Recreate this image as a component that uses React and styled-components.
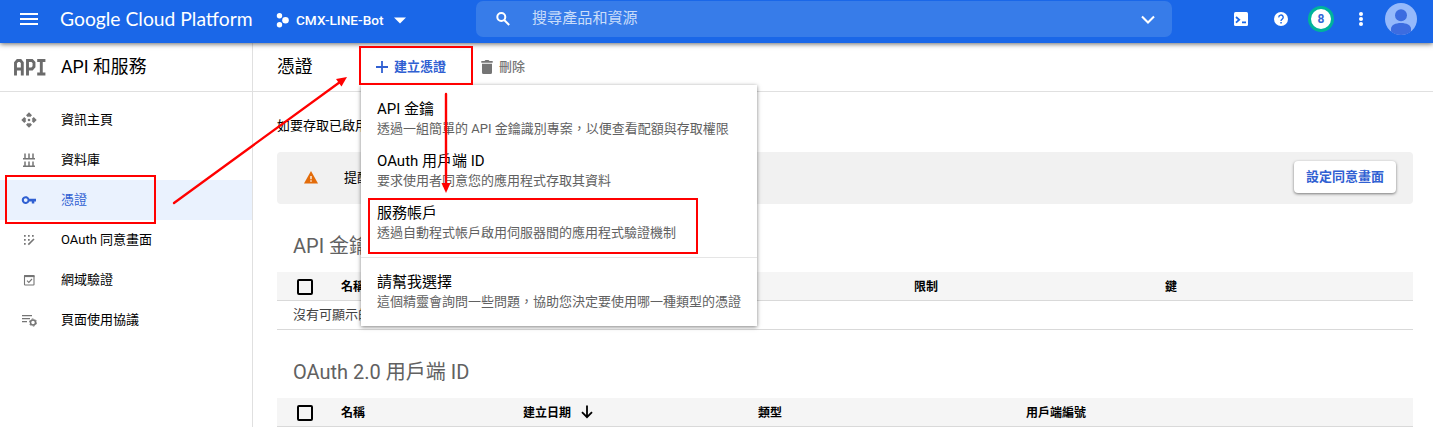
import React from 'react';
import styled, { createGlobalStyle } from 'styled-components';

const Global = createGlobalStyle`
  * { box-sizing: border-box; }
  body {
    margin: 0;
    background: #fff;
    color: #000;
    font-family: Roboto, "Noto Sans CJK TC", sans-serif;
    font-size: 13px;
    overflow: hidden;
  }
  svg { display: block; flex: none; }
`;

const Page = styled.div`
  position: relative;
  height: 427px;
  overflow: hidden;
  display: flex;
  flex-direction: column;
`;

const TopBar = styled.header`
  position: relative;
  display: flex;
  align-items: center;
  flex: none;
  height: 43px;
  padding: 0 16px 5px 17px;
  background: #1a67e8;
  color: #fff;
  box-shadow: 0 1px 5px rgba(0, 0, 0, 0.6);
  z-index: 1;
`;

const Logo = styled.div`
  width: 194px;
  margin-left: 19px;
  font-family: Lato, sans-serif;
  font-size: 19.3px;
  line-height: 26px;
  white-space: nowrap;
`;

const Project = styled.div`
  display: flex;
  align-items: center;
  width: 200px;
  margin-left: 21px;
  padding-top: 2px;
  font-size: 13.6px;
  font-weight: 500;
  white-space: nowrap;
`;

const ProjectName = styled.span`
  width: 88px;
  margin: 0 10px 0 7px;
`;

const Search = styled.div`
  display: flex;
  align-items: center;
  width: 696px;
  height: 36px;
  margin-left: 1px;
  padding: 0 14px 0 18px;
  border-radius: 7px;
  background: #377ce9;
  color: #c9dcfa;
  font-size: 15.1px;
`;

const SearchText = styled.span`
  flex: 1;
  margin-left: 20px;
  line-height: 20px;
  padding-bottom: 3px;
`;

const Tools = styled.div`
  display: flex;
  align-items: center;
  margin-left: auto;
`;

const ToolIcon = styled.svg`
  margin-right: ${(p) => p.$gap}px;
`;

const Badge = styled.div`
  display: flex;
  align-items: center;
  justify-content: center;
  width: 26px;
  height: 26px;
  margin-right: 24px;
  border: 3px solid #00b39b;
  border-radius: 50%;
  background: #fff;
  color: #3367d6;
  font-size: 12px;
  font-weight: 700;
`;

const Body = styled.div`
  display: flex;
  flex: 1;
  min-height: 0;
`;

const Sidebar = styled.nav`
  width: 253px;
  flex: none;
  border-right: 1px solid #e0e0e0;
`;

const Label = styled.span`
  padding-bottom: ${(p) => p.$lift || 4}px;
`;

const SideTitle = styled.div`
  display: flex;
  align-items: center;
  gap: 15px;
  height: 49px;
  padding-left: 14px;
  border-bottom: 1px solid #e0e0e0;
  font-size: 17.8px;
`;

const SideList = styled.div`
  padding-top: 8px;
`;

const SideItem = styled.div`
  display: flex;
  align-items: center;
  gap: 24px;
  height: 40px;
  padding-left: 21px;
  color: ${(p) => (p.$active ? '#3060d2' : '#000')};
  background: ${(p) => (p.$active ? '#eaf2fe' : 'transparent')};
  svg { color: ${(p) => (p.$active ? '#3060d2' : '#757575')}; }
`;

const Main = styled.main`
  flex: 1;
  min-width: 0;
`;

const Toolbar = styled.div`
  display: flex;
  align-items: center;
  height: 49px;
  padding-left: 24px;
  border-bottom: 1px solid #e0e0e0;
`;

const PageTitle = styled.h1`
  width: 98px;
  margin: 0;
  padding-bottom: 4px;
  font-size: 17.8px;
  font-weight: 400;
`;

const ToolButton = styled.div`
  display: flex;
  align-items: center;
  gap: 5px;
  width: ${(p) => p.$width}px;
  color: ${(p) => (p.$primary ? '#3060d2' : '#757575')};
  font-weight: ${(p) => (p.$primary ? 700 : 500)};
`;

const Content = styled.div`
  padding: 21px 20px 0 24px;
`;

const Intro = styled.div`
  height: 39px;
  line-height: 25px;
`;

const Notice = styled.div`
  display: flex;
  align-items: center;
  height: 52px;
  padding: 0 17px 2px 27px;
  border-radius: 4px;
  background: #f1f1f1;
`;

const NoticeText = styled.span`
  flex: 1;
  margin-left: 26px;
  padding-bottom: 1px;
`;

const RaisedButton = styled.button`
  width: 102px;
  height: 32px;
  padding: 0 0 4px;
  border: 0;
  border-radius: 4px;
  background: #fff;
  color: #3060d2;
  font: inherit;
  font-weight: 700;
  box-shadow: 0 1px 3px rgba(0, 0, 0, 0.5);
`;

const SectionTitle = styled.h2`
  height: 68px;
  margin: 0;
  padding: 26px 0 0 16px;
  color: #616161;
  font-size: 20px;
  font-weight: 400;
  line-height: 33px;
`;

const HeadRow = styled.div`
  display: flex;
  align-items: center;
  height: 29px;
  padding-left: 20px;
  border-bottom: 1px solid #d9d9d9;
  background: #f5f5f5;
  font-size: 12px;
  font-weight: 700;
`;

const Check = styled.div`
  width: 16px;
  height: 16px;
  margin: 2px 28px 0 0;
  border: 2px solid #000;
  border-radius: 2px;
`;

const Cell = styled.div`
  display: flex;
  align-items: center;
  gap: 10px;
  width: ${(p) => p.$width}px;
`;

const EmptyRow = styled.div`
  height: 29px;
  padding-left: 16px;
  border-bottom: 1px solid #d9d9d9;
  color: #424242;
  line-height: 27px;
`;

const Menu = styled.div`
  position: absolute;
  left: 361px;
  top: 85px;
  width: 396px;
  height: 241px;
  padding-top: 13px;
  background: #fff;
  box-shadow: 0 1px 4px rgba(0, 0, 0, 0.5);
  z-index: 2;
`;

const MenuItem = styled.div`
  height: 52px;
  padding-left: 16px;
  white-space: nowrap;
`;

const MenuName = styled.div`
  height: 21px;
  font-size: 15px;
  line-height: 23px;
`;

const MenuHint = styled.div`
  color: #616161;
  line-height: 19px;
`;

const MenuRule = styled.div`
  height: 1px;
  margin: 3px 0 13px;
  background: #e5e5e5;
`;

const Mark = styled.div`
  position: absolute;
  z-index: 3;
  left: ${(p) => p.$x}px;
  top: ${(p) => p.$y}px;
  width: ${(p) => p.$w}px;
  height: ${(p) => p.$h}px;
  border: 2px solid #f00;
`;

const Arrows = styled.svg`
  position: absolute;
  z-index: 3;
  left: 0;
  top: 0;
  pointer-events: none;
`;

const ApiIcon = () => (
  <svg width="32" height="18" viewBox="0 0 32 18" fill="none" stroke="#6b6b6b" strokeWidth="2.9">
    <path d="M1.5 17.5V4.7L3.5 2.5H6.5L8.3 4.7V17.5M1.3 11H8.5" />
    <path d="M13.5 17.5V2.5H18L20 4.5V8.8L18 11H13.3" />
    <path d="M23.2 2.5H31.4M27.3 2.3V16M23.2 16H31.4" />
  </svg>
);

const sideItems = [
  {
    label: '資訊主頁',
    icon: (
      <g fill="currentColor">
        <path d="M8 .3 11 3.3 9 5.3 8 4.3 7 5.3 5 3.3ZM8 15.7 5 12.7 7 10.7 8 11.7 9 10.7 11 12.7ZM.3 8 3.3 5 5.3 7 4.3 8 5.3 9 3.3 11ZM15.7 8 12.7 11 10.7 9 11.7 8 10.7 7 12.7 5Z" />
        <circle cx="8" cy="8" r="1.3" />
      </g>
    ),
  },
  {
    label: '資料庫',
    icon: <path d="M2 6.7H14M2 14.3H14M4 1.5V7M8 1.5V7M12 1.5V7M4 9.5V14M8 9.5V14M12 9.5V14" fill="none" stroke="currentColor" strokeWidth="1.5" />,
  },
  {
    label: '憑證',
    active: true,
    icon: <path d="M8.3 6.8A3.9 3.9 0 1 0 8.3 9.4H10.8V11.6H13.3V9.4H15V6.8ZM4.7 10A1.9 1.9 0 1 1 4.7 6.2 1.9 1.9 0 0 1 4.7 10Z" fill="currentColor" fillRule="evenodd" />,
  },
  {
    label: 'OAuth 同意畫面',
    icon: (
      <g fill="currentColor">
        <path d="M3 3h1.7v1.7H3zM7 3h1.7v1.7H7zM11 3h1.7v1.7H11zM3 7h1.7v1.7H3zM7 7h1.7v1.7H7zM3 11h1.7v1.7H3z" />
        <path d="M7.3 12.6 13 7" stroke="currentColor" strokeWidth="1.6" />
      </g>
    ),
  },
  {
    label: '網域驗證',
    icon: (
      <g fill="none" stroke="currentColor">
        <rect x="3.5" y="3.5" width="9.5" height="9.5" rx=".6" strokeWidth="1.1" />
        <path d="M3 4.2H13.5" strokeWidth="1.8" />
        <path d="m6 8.7 1.8 1.7L11 7" strokeWidth="1.1" />
      </g>
    ),
  },
  {
    label: '頁面使用協議',
    icon: (
      <g fill="none" stroke="currentColor">
        <path d="M1 3.7H11M1 6.7H9M1 9.7H6" strokeWidth="1.3" />
        <circle cx="12" cy="10.5" r="2.5" strokeWidth="1.5" />
        <circle cx="12" cy="10.5" r="3.6" strokeWidth="1" strokeDasharray="1.9 1.87" />
      </g>
    ),
  },
];

const menuItems = [
  ['API 金鑰', '透過一組簡單的 API 金鑰識別專案，以便查看配額與存取權限'],
  ['OAuth 用戶端 ID', '要求使用者同意您的應用程式存取其資料'],
  ['服務帳戶', '透過自動程式帳戶啟用伺服器間的應用程式驗證機制'],
];

export default function App() {
  return (
    <>
      <Global />
      <Page>
        <TopBar>
          <svg width="24" height="16" viewBox="0 0 24 16" stroke="#fff" strokeWidth="2">
            <path d="M3 3H21M3 8H21M3 13H21" />
          </svg>
          <Logo>Google Cloud Platform</Logo>
          <Project>
            <svg width="14" height="16" viewBox="0 0 14 16" fill="#fff">
              <circle cx="4.5" cy="3.7" r="2.7" />
              <circle cx="10.5" cy="8.3" r="3.3" />
              <circle cx="4.5" cy="12.8" r="2.7" />
            </svg>
            <ProjectName>CMX-LINE-Bot</ProjectName>
            <svg width="12" height="7" viewBox="0 0 12 7" fill="#fff"><path d="M0 .5H12L6 6.5Z" /></svg>
          </Project>
          <Search>
            <svg width="18" height="18" viewBox="0 0 18 18" fill="none" stroke="#fff" strokeWidth="2">
              <circle cx="7.3" cy="7" r="4" />
              <path d="m10.2 10 5 5" />
            </svg>
            <SearchText>搜尋產品和資源</SearchText>
            <svg width="20" height="16" viewBox="0 0 20 16" fill="none" stroke="#fff" strokeWidth="2.1"><path d="m4 5.5 6 6 6-6" /></svg>
          </Search>
          <Tools>
            <ToolIcon $gap={26} width="14" height="14" viewBox="0 0 14 14">
              <rect width="14" height="14" rx="1.5" fill="#fff" />
              <path d="m2 5 3.2 2.8L2 10.6M8 10.3H12" fill="none" stroke="#1a67e8" strokeWidth="1.8" />
            </ToolIcon>
            <ToolIcon $gap={20} width="14" height="14" viewBox="0 0 14 14">
              <circle cx="7" cy="7" r="7" fill="#fff" />
              <path d="M4.8 5.4A2.2 2.2 0 1 1 8.2 7.1C7.3 7.7 7 8 7 9" fill="none" stroke="#1a67e8" strokeWidth="1.4" />
              <rect x="6.3" y="10" width="1.5" height="1.5" fill="#1a67e8" />
            </ToolIcon>
            <Badge>8</Badge>
            <ToolIcon $gap={21} width="6" height="14" viewBox="0 0 6 14" fill="#fff">
              <circle cx="3" cy="2" r="2" />
              <circle cx="3" cy="7" r="2" />
              <circle cx="3" cy="12" r="2" />
            </ToolIcon>
            <svg width="32" height="32" viewBox="0 0 32 32">
              <circle cx="16" cy="16" r="16" fill="#95b9fb" />
              <circle cx="16" cy="12.3" r="6" fill="#3c6ce0" />
              <path d="M6 28.4V26C6 22 10.5 20 16 20S26 22 26 26V28.4A16 16 0 0 1 6 28.4Z" fill="#3c6ce0" />
            </svg>
          </Tools>
        </TopBar>
        <Body>
          <Sidebar>
            <SideTitle><ApiIcon /><Label>API 和服務</Label></SideTitle>
            <SideList>
              {sideItems.map((item) => (
                <SideItem key={item.label} $active={item.active}>
                  <svg width="16" height="16" viewBox="0 0 16 16">{item.icon}</svg>
                  <Label>{item.label}</Label>
                </SideItem>
              ))}
            </SideList>
          </Sidebar>
          <Main>
            <Toolbar>
              <PageTitle>憑證</PageTitle>
              <ToolButton $primary $width={106}>
                <svg width="14" height="14" viewBox="0 0 14 14" stroke="currentColor" strokeWidth="1.8">
                  <path d="M7 1V13M1 7H13" />
                </svg>
                <Label>建立憑證</Label>
              </ToolButton>
              <ToolButton $width={60}>
                <svg width="13" height="14" viewBox="0 0 13 14" fill="currentColor">
                  <path d="M.3 1H3.5L4.5 0H7.5L8.5 1H11.7V2.8H.3ZM1 3.8H11V12.5Q11 14 9.5 14H2.5Q1 14 1 12.5Z" />
                </svg>
                <Label>刪除</Label>
              </ToolButton>
            </Toolbar>
            <Content>
              <Intro>如要存取已啟用</Intro>
              <Notice>
                <svg width="14" height="13" viewBox="0 0 14 13">
                  <path d="M7 0 14 12.5H0Z" fill="#e36c0a" />
                  <path d="M7 5V8.3M7 9.3V10.7" stroke="#fff" strokeWidth="1.3" />
                </svg>
                <NoticeText>提醒</NoticeText>
                <RaisedButton>設定同意畫面</RaisedButton>
              </Notice>
              <SectionTitle>API 金鑰</SectionTitle>
              <HeadRow>
                <Check />
                <Cell $width={573}><Label $lift={2}>名稱</Label></Cell>
                <Cell $width={251}><Label $lift={2}>限制</Label></Cell>
                <Cell $width={200}><Label $lift={2}>鍵</Label></Cell>
              </HeadRow>
              <EmptyRow>沒有可顯示的</EmptyRow>
              <SectionTitle>OAuth 2.0 用戶端 ID</SectionTitle>
              <HeadRow>
                <Check />
                <Cell $width={182}><Label $lift={2}>名稱</Label></Cell>
                <Cell $width={235}>
                  <Label $lift={2}>建立日期</Label>
                  <svg width="12" height="14" viewBox="0 0 12 14" fill="none" stroke="#000" strokeWidth="1.8">
                    <path d="M6 .5V12M1 7.2 6 12.2 11 7.2" />
                  </svg>
                </Cell>
                <Cell $width={268}><Label $lift={2}>類型</Label></Cell>
                <Cell $width={200}><Label $lift={2}>用戶端編號</Label></Cell>
              </HeadRow>
            </Content>
          </Main>
        </Body>
        <Menu>
          {menuItems.map(([name, hint]) => (
            <MenuItem key={name}>
              <MenuName>{name}</MenuName>
              <MenuHint>{hint}</MenuHint>
            </MenuItem>
          ))}
          <MenuRule />
          <MenuItem>
            <MenuName>請幫我選擇</MenuName>
            <MenuHint>這個精靈會詢問一些問題，協助您決定要使用哪一種類型的憑證</MenuHint>
          </MenuItem>
        </Menu>
        <Mark $x={5} $y={175} $w={151} $h={49} />
        <Mark $x={359} $y={46} $w={114} $h={39} />
        <Mark $x={368} $y={198} $w={330} $h={56} />
        <Arrows width="500" height="220" viewBox="0 0 500 220" fill="#f00" stroke="#f00">
          <path d="M174 203 340 82" strokeWidth="2.3" strokeLinecap="round" />
          <path d="M347 77 341.5 86.5 336 79Z" stroke="none" />
          <path d="M446 94V184" strokeWidth="2.4" strokeLinecap="round" />
          <path d="M446 193 441.5 183H450.5Z" stroke="none" />
        </Arrows>
      </Page>
    </>
  );
}
